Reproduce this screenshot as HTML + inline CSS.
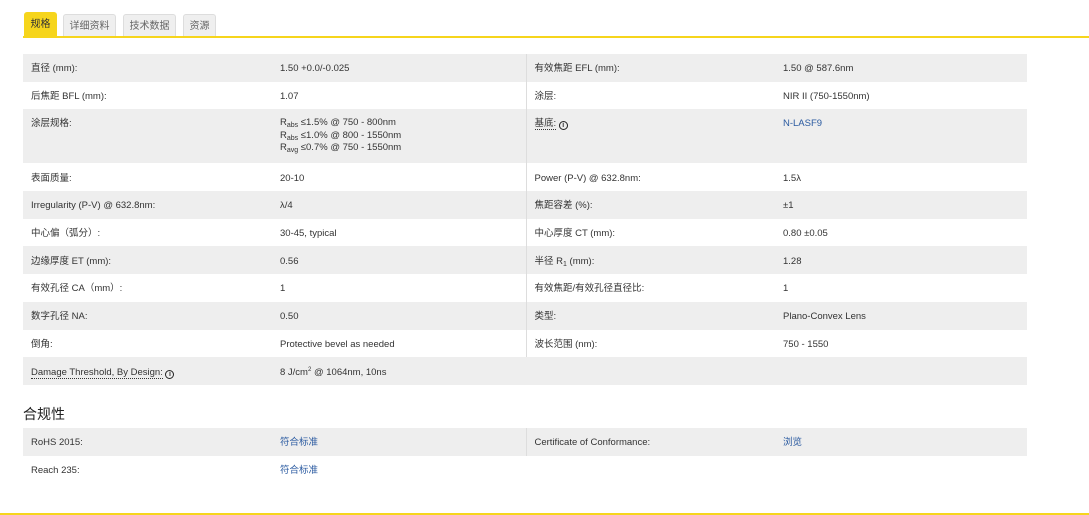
<!DOCTYPE html>
<html><head><meta charset="utf-8"><style>
body{margin:0;width:1089px;height:515px;background:#fff;font-family:"Liberation Sans","Noto Sans CJK SC",sans-serif;font-size:9.5px;color:#333;position:relative;overflow:hidden}
.tab{position:absolute;top:14px;height:22px;line-height:24px;font-size:10px;text-align:center;background:#efefef;border:1px solid #ddd;border-bottom:none;border-radius:3px 3px 0 0;color:#666;box-sizing:border-box}
.tab.on{background:#f6d51c;border-color:#f6d51c;color:#333;top:12px;height:25px}
.line{position:absolute;left:23px;right:0;top:36px;height:2px;background:#f6d51c}
table{position:absolute;left:23px;width:1004px;border-collapse:collapse;table-layout:fixed}
td{padding:3px 0 0 8px;height:27.7px;line-height:12px;vertical-align:middle;box-sizing:border-box;overflow:hidden}
tr.g td{background:#eee}
td.c1{width:249px}td.c2{width:254px;border-right:1px solid #ddd}td.c3{width:249px}
a{color:#2a5aa0;text-decoration:none}
.dot{border-bottom:1px dotted #333}
.i{display:inline-block;width:9px;height:9px;border:1.2px solid #222;border-radius:50%;font-size:7px;line-height:7px;text-align:center;font-weight:bold;box-sizing:border-box;vertical-align:-1px}
sub{font-size:7px;line-height:0;vertical-align:-2px}
sup{font-size:6px;line-height:0;vertical-align:4px}
h3{position:absolute;left:23px;top:405px;margin:0;font-size:14px;line-height:18px;font-weight:normal;color:#222}
</style></head><body>
<div class="tab on" style="left:24px;width:33px">规格</div>
<div class="tab" style="left:63px;width:53px">详细资料</div>
<div class="tab" style="left:123px;width:53px">技术数据</div>
<div class="tab" style="left:183px;width:33px">资源</div>
<div class="line"></div>
<table style="top:54px">
<tr class="g"><td class="c1">直径 (mm):</td><td class="c2">1.50 +0.0/-0.025</td><td class="c3">有效焦距 EFL (mm):</td><td>1.50 @ 587.6nm</td></tr>
<tr><td class="c1">后焦距 BFL (mm):</td><td class="c2">1.07</td><td class="c3">涂层:</td><td>NIR II (750-1550nm)</td></tr>
<tr class="g"><td class="c1" style="vertical-align:top;padding-top:9px;height:54px">涂层规格:</td><td class="c2" style="vertical-align:top;padding-top:8px;line-height:12.5px">R<sub>abs</sub> ≤1.5% @ 750 - 800nm<br>R<sub>abs</sub> ≤1.0% @ 800 - 1550nm<br>R<sub>avg</sub> ≤0.7% @ 750 - 1550nm</td><td class="c3" style="vertical-align:top;padding-top:9px"><span class="dot">基底:</span> <span class="i">i</span></td><td style="vertical-align:top;padding-top:9px"><a>N-LASF9</a></td></tr>
<tr><td class="c1">表面质量:</td><td class="c2">20-10</td><td class="c3">Power (P-V) @ 632.8nm:</td><td>1.5λ</td></tr>
<tr class="g"><td class="c1">Irregularity (P-V) @ 632.8nm:</td><td class="c2">λ/4</td><td class="c3">焦距容差 (%):</td><td>±1</td></tr>
<tr><td class="c1">中心偏（弧分）:</td><td class="c2">30-45, typical</td><td class="c3">中心厚度 CT (mm):</td><td>0.80 ±0.05</td></tr>
<tr class="g"><td class="c1">边缘厚度 ET (mm):</td><td class="c2">0.56</td><td class="c3">半径 R<sub>1</sub> (mm):</td><td>1.28</td></tr>
<tr><td class="c1">有效孔径 CA（mm）:</td><td class="c2">1</td><td class="c3">有效焦距/有效孔径直径比:</td><td>1</td></tr>
<tr class="g"><td class="c1">数字孔径 NA:</td><td class="c2">0.50</td><td class="c3">类型:</td><td>Plano-Convex Lens</td></tr>
<tr><td class="c1">倒角:</td><td class="c2">Protective bevel as needed</td><td class="c3">波长范围 (nm):</td><td>750 - 1550</td></tr>
<tr class="g"><td class="c1"><span class="dot">Damage Threshold, By Design:</span> <span class="i">i</span></td><td class="c2" style="border-right:none">8 J/cm<sup>2</sup> @ 1064nm, 10ns</td><td class="c3"></td><td></td></tr>
</table>
<h3>合规性</h3>
<table style="top:428px">
<tr class="g"><td class="c1">RoHS 2015:</td><td class="c2"><a>符合标准</a></td><td class="c3">Certificate of Conformance:</td><td><a>浏览</a></td></tr>
<tr><td class="c1">Reach 235:</td><td class="c2" style="border-right:none"><a>符合标准</a></td><td class="c3"></td><td></td></tr>
</table>
<div style="position:absolute;left:0;right:0;top:513px;height:2px;background:#f6d51c"></div>
</body></html>
